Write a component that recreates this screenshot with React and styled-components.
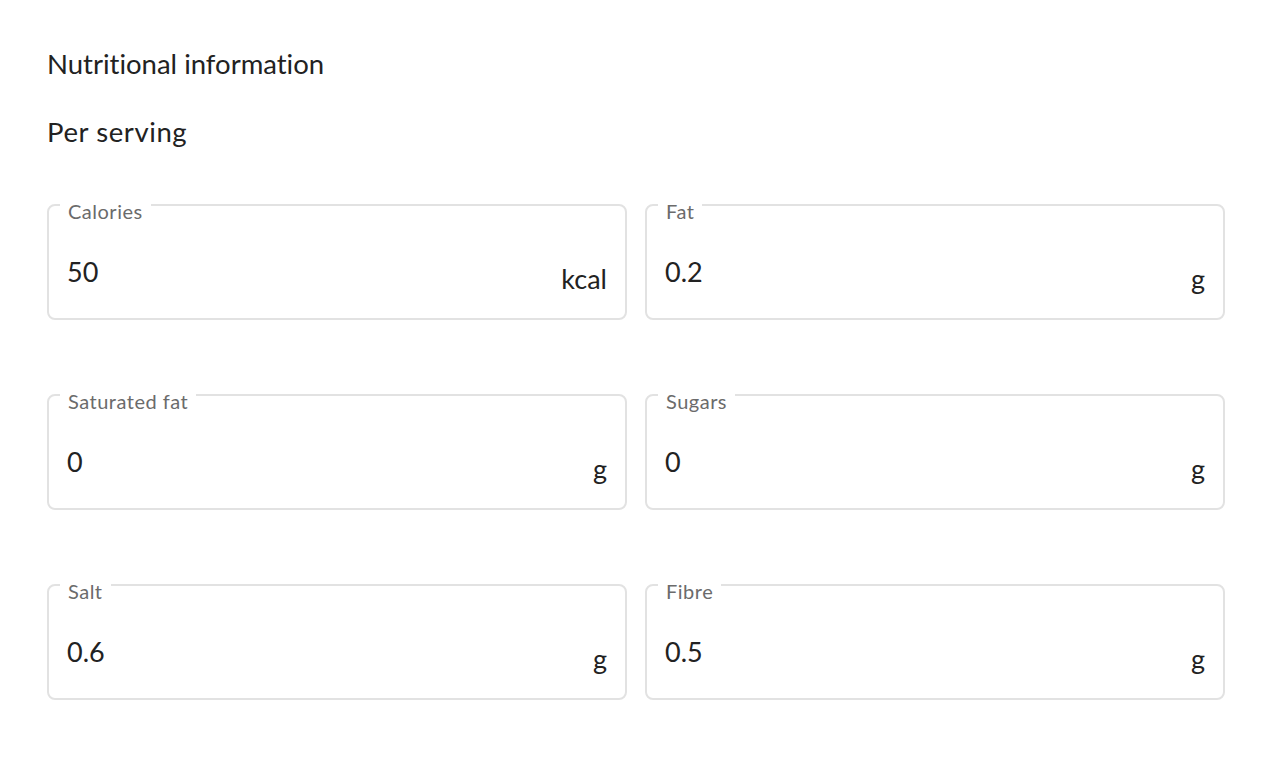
import React from "react";
import styled, { createGlobalStyle } from "styled-components";

const Global = createGlobalStyle`
  html, body { margin: 0; padding: 0; background: #fff; }
  body {
    font-family: Lato, "Open Sans", sans-serif;
    color: #222;
    font-variant-ligatures: none;
    font-feature-settings: "liga" 0, "clig" 0;
  }
`;

const Page = styled.div`
  padding: 48px 47px 0 47px;
  width: 1178px;
`;

const Title = styled.h2`
  margin: 0;
  font-size: 27.5px;
  line-height: 32px;
  font-weight: 400;
  color: #222;
`;

const Subtitle = styled.h3`
  margin: 36px 0 0;
  font-size: 27.5px;
  line-height: 32px;
  font-weight: 400;
  letter-spacing: 0.6px;
  color: #222;
`;

const Grid = styled.div`
  margin-top: 56px;
  display: grid;
  grid-template-columns: 580px 580px;
  column-gap: 18px;
  row-gap: 74px;
`;

const Field = styled.div`
  position: relative;
  box-sizing: border-box;
  height: 116px;
  border: 2px solid #e2e2e2;
  border-radius: 8px;
  padding: 50px 18px 0 18px;
  display: flex;
  justify-content: space-between;
  align-items: flex-start;
`;

const Label = styled.span`
  position: absolute;
  top: -6px;
  left: 11px;
  padding: 0 8px;
  background: #fff;
  font-size: 20px;
  line-height: 22px;
  letter-spacing: 0.5px;
  color: #6b6b6b;
`;

const Value = styled.span`
  font-size: 27px;
  line-height: 32px;
  color: #222;
`;

const Unit = styled.span`
  font-size: 27px;
  line-height: 32px;
  padding-top: 7px;
  color: #222;
`;

const items = [
  { label: "Calories", value: "50", unit: "kcal" },
  { label: "Fat", value: "0.2", unit: "g" },
  { label: "Saturated fat", value: "0", unit: "g" },
  { label: "Sugars", value: "0", unit: "g" },
  { label: "Salt", value: "0.6", unit: "g" },
  { label: "Fibre", value: "0.5", unit: "g" },
];

export default function App() {
  return (
    <>
      <Global />
      <Page>
        <Title>Nutritional information</Title>
        <Subtitle>Per serving</Subtitle>
        <Grid>
          {items.map((it) => (
            <Field key={it.label}>
              <Label>{it.label}</Label>
              <Value>{it.value}</Value>
              <Unit>{it.unit}</Unit>
            </Field>
          ))}
        </Grid>
      </Page>
    </>
  );
}
